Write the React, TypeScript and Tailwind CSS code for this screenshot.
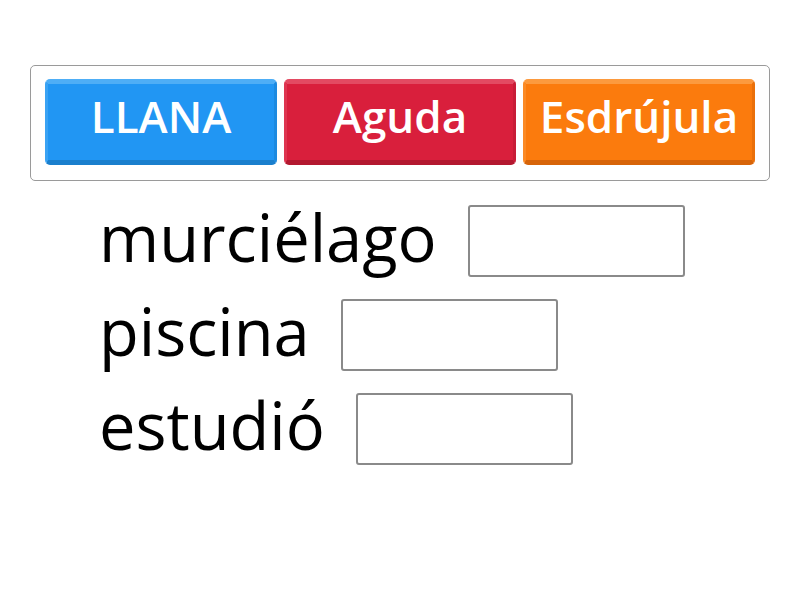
import React from 'react';

interface Category {
  label: string;
  className: string;
}

const categories: Category[] = [
  {
    label: 'LLANA',
    className:
      'bg-[#2196f3] border-t-[#4eaef6] border-l-[#3aa3f4] border-r-[#1c8ae0] border-b-[#1a7fcd]',
  },
  {
    label: 'Aguda',
    className:
      'bg-[#d91f3c] border-t-[#e34a62] border-l-[#de3550] border-r-[#c81c37] border-b-[#b3182f]',
  },
  {
    label: 'Esdrújula',
    className:
      'bg-[#fb7b0d] border-t-[#fc9a3e] border-l-[#fb8a25] border-r-[#ea700a] border-b-[#d76409]',
  },
];

const words = [
  { text: 'murciélago' },
  { text: 'piscina' },
  { text: 'estudió' },
];

// Drop slot next to each word
const AnswerBox: React.FC = () => (
  <div className="w-[217px] h-[72px] border-2 border-[#8a8a8a] rounded-[3px] bg-white" />
);

export default function App() {
  return (
    <div
      className="w-[800px] h-[600px] bg-white overflow-hidden"
      style={{ fontFamily: '"Open Sans", "Noto Sans", sans-serif' }}
    >
      <div className="mt-[65px] mx-[30px] h-[116px] border border-[#9a9a9a] rounded-[5px] px-[14px] pt-[13px] flex gap-[7px]">
        {categories.map((c) => (
          <div
            key={c.label}
            className={`w-[232px] h-[86px] rounded-[5px] border-t-[5px] border-x-[3px] border-b-[5px] pb-[12px] flex items-center justify-center text-white font-semibold text-[44px] leading-none ${c.className}`}
          >
            {c.label}
          </div>
        ))}
      </div>

      <div className="mt-[13px] pl-[99px] flex flex-col">
        {words.map((w) => (
          <div key={w.text} className="h-[94px] flex items-center gap-[31px]">
            <span className="text-[65px] leading-none text-black mb-[8px]">{w.text}</span>
            <AnswerBox />
          </div>
        ))}
      </div>
    </div>
  );
}
